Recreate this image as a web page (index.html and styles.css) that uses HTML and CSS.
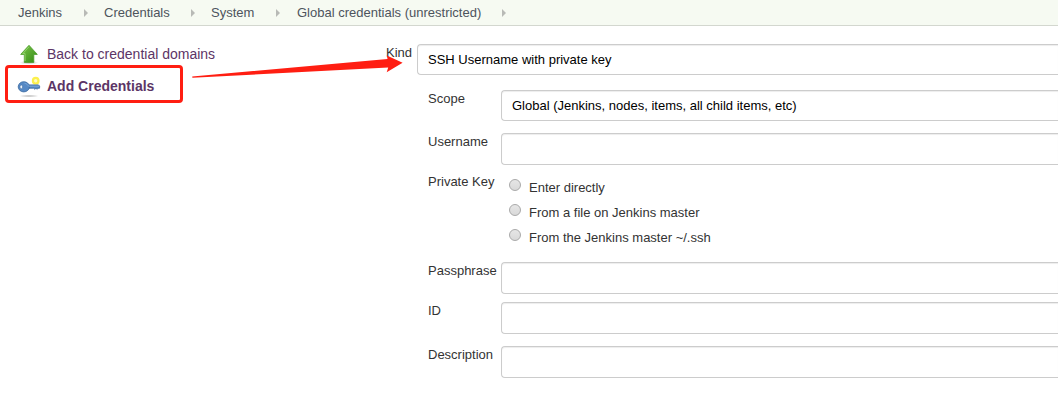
FILE: index.html
```html
<!DOCTYPE html>
<html lang="en">
<head>
<meta charset="utf-8">
<title>Global credentials (unrestricted)</title>
<link rel="stylesheet" href="styles.css">
</head>
<body>
<nav class="breadcrumbs">
  <a class="crumb crumb-root">Jenkins</a><i class="chevron"></i>
  <a class="crumb crumb-creds">Credentials</a><i class="chevron"></i>
  <a class="crumb crumb-system">System</a><i class="chevron"></i>
  <a class="crumb crumb-global">Global credentials (unrestricted)</a><i class="chevron"></i>
</nav>
<div class="page">
  <aside class="side">
    <a class="task">
      <svg class="icon" width="24" height="24" viewBox="0 0 24 24">
        <defs>
          <linearGradient id="green" x1="0" y1="0" x2="1" y2="1"><stop offset="0" stop-color="#7cc64a"/><stop offset="1" stop-color="#358c16"/></linearGradient>
          <radialGradient id="shade"><stop offset="0" stop-color="#888" stop-opacity=".6"/><stop offset="1" stop-color="#888" stop-opacity="0"/></radialGradient>
        </defs>
        <ellipse cx="12" cy="20.6" rx="9.5" ry="2" fill="url(#shade)"/>
        <path d="M12 3.3 20.3 12.4H16.8V20.4H7.3V12.4H3.7Z" fill="url(#green)" stroke="#4a9c2a" stroke-width=".8" stroke-linejoin="round"/>
        <path d="M12 4.8 5.8 11.6H8.1V19" fill="none" stroke="#a3dc7c" stroke-width=".7"/>
      </svg>
      <span>Back to credential domains</span>
    </a>
    <a class="task task-active">
      <svg class="icon" width="24" height="24" viewBox="0 0 24 24">
        <ellipse cx="12" cy="22" rx="10" ry="1.5" fill="url(#shade)"/>
        <circle cx="18.7" cy="6.7" r="2.8" fill="#fffbc0" stroke="#fcf04c" stroke-width="2.2"/>
        <g fill="#5689c5" stroke="#39689f" stroke-width=".8" stroke-linejoin="round">
          <path d="M10.8 10.9H21.5L22.6 12.1V14.2H20.9L20.2 15.3 19 14.2 17.8 15.3 16.6 14.2H10.8Z"/>
          <ellipse cx="6.8" cy="12.8" rx="5.6" ry="5.1"/>
        </g>
        <path d="M7.5 9.2C11 10 11 12.2 12 12.2H22" fill="none" stroke="#8db5e0" stroke-width=".7"/>
        <ellipse cx="4.3" cy="12.9" rx="1.4" ry="1.9" fill="#f0f4fa" stroke="#39689f" stroke-width=".6"/>
      </svg>
      <span>Add Credentials</span>
    </a>
  </aside>
  <main class="form">
    <div class="row row-kind"><label class="label label-kind">Kind</label><div class="field select">SSH Username with private key</div></div>
    <div class="nested">
      <div class="row row-scope"><label class="label">Scope</label><div class="field select">Global (Jenkins, nodes, items, all child items, etc)</div></div>
      <div class="row row-user"><label class="label">Username</label><div class="field"></div></div>
      <div class="row row-key"><label class="label">Private Key</label>
        <div class="options">
          <label class="option"><i class="radio"></i><span>Enter directly</span></label>
          <label class="option"><i class="radio"></i><span>From a file on Jenkins master</span></label>
          <label class="option"><i class="radio"></i><span>From the Jenkins master ~/.ssh</span></label>
        </div>
      </div>
      <div class="row row-pass"><label class="label">Passphrase</label><div class="field"></div></div>
      <div class="row row-id"><label class="label">ID</label><div class="field"></div></div>
      <div class="row"><label class="label">Description</label><div class="field"></div></div>
    </div>
  </main>
</div>
<div class="highlight"></div>
<svg class="arrow" width="213" height="26" viewBox="190 52 213 26">
  <path d="M192.2 76.6 387.5 58.9 386.8 55.6 402.6 62.7 386.7 72.3 388.2 67.6 192.4 77.8Z" fill="#ff1e12"/>
</svg>
</body>
</html>
```
FILE: styles.css
```css
* { box-sizing: border-box; }
body {
  margin: 0;
  height: 402px;
  overflow: hidden;
  background: #fff;
  color: #333;
  font: 13px/16px "Liberation Sans", Arial, sans-serif;
}
.breadcrumbs {
  display: flex;
  align-items: center;
  height: 26px;
  padding-left: 18px;
  background: #f6faf2;
  border-bottom: 1px solid #d3d7cf;
  color: #4d545d;
  white-space: nowrap;
}
.crumb-root { width: 66px; }
.crumb-creds { width: 87px; }
.crumb-system { width: 65px; }
.crumb-global { width: 206px; padding-left: 1px; }
.chevron {
  width: 0;
  height: 0;
  margin-right: 16px;
  border: solid transparent;
  border-width: 4px 0 4px 4px;
  border-left-color: #b8bab6;
}
.page { display: flex; }
.side { width: 386px; padding: 16px 0 0 17px; }
.task {
  display: flex;
  align-items: center;
  gap: 6px;
  height: 24px;
  margin-bottom: 8px;
  color: #5c3566;
  font-size: 14px;
  white-space: nowrap;
}
.task-active { font-weight: bold; }
.icon { flex: none; }
.form { flex: 1; min-width: 0; padding-top: 18px; }
.nested { padding-left: 42px; }
.row { display: flex; align-items: flex-start; white-space: nowrap; }
.label { flex: none; width: 73px; padding-top: 1px; }
.label-kind { width: 31px; }
.field {
  flex: 1;
  min-width: 0;
  height: 32px;
  border: 1px solid #ccc;
  border-right: 0;
  border-radius: 4px 0 0 4px;
  background: #fff;
  box-shadow: inset 0 1px 1px rgba(0, 0, 0, .075);
  color: #000;
}
.select { height: 31px; padding-left: 10px; line-height: 30px; }
.row-kind { margin-bottom: 15px; }
.row-scope { margin-bottom: 12px; }
.row-user { margin-bottom: 8px; }
.row-key { height: 89px; }
.row-pass { margin-bottom: 8px; }
.row-id { margin-bottom: 12px; }
.options { padding: 2px 0 0 8px; }
.option { display: flex; align-items: center; gap: 8px; height: 25px; }
.radio {
  width: 12px;
  height: 12px;
  margin-top: -5px;
  border: 1px solid #a9a9a9;
  border-radius: 50%;
  background: linear-gradient(#e6e6e6, #d9d9d9);
}
.highlight {
  position: absolute;
  left: 5px;
  top: 65px;
  width: 178px;
  height: 38px;
  border: 3px solid #ff1e12;
  border-radius: 4px;
}
.arrow { position: absolute; left: 190px; top: 52px; }
```
